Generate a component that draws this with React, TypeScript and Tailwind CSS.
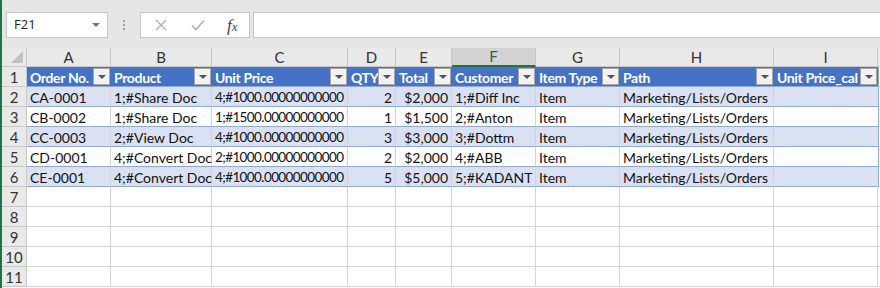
import React from "react";

const cols = [
  { key: "A", w: "w-[84px]", label: "Order No." },
  { key: "B", w: "w-[101px]", label: "Product" },
  { key: "C", w: "w-[136px]", label: "Unit Price" },
  { key: "D", w: "w-[48px]", label: "QTY" },
  { key: "E", w: "w-[56px]", label: "Total" },
  { key: "F", w: "w-[84px]", label: "Customer" },
  { key: "G", w: "w-[84px]", label: "Item Type" },
  { key: "H", w: "w-[154px]", label: "Path" },
  { key: "I", w: "w-[104px]", label: "Unit Price_cal" },
];

const rows = [
  ["CA-0001", "1;#Share Doc", "4;#1000.00000000000", "2", "$2,000", "1;#Diff Inc", "Item", "Marketing/Lists/Orders", ""],
  ["CB-0002", "1;#Share Doc", "1;#1500.00000000000", "1", "$1,500", "2;#Anton", "Item", "Marketing/Lists/Orders", ""],
  ["CC-0003", "2;#View Doc", "4;#1000.00000000000", "3", "$3,000", "3;#Dottm", "Item", "Marketing/Lists/Orders", ""],
  ["CD-0001", "4;#Convert Doc", "2;#1000.00000000000", "2", "$2,000", "4;#ABB", "Item", "Marketing/Lists/Orders", ""],
  ["CE-0001", "4;#Convert Doc", "4;#1000.00000000000", "5", "$5,000", "5;#KADANT", "Item", "Marketing/Lists/Orders", ""],
];

const font = "font-['Lato','Liberation_Sans',sans-serif]";

function FilterButton() {
  return (
    <div className="mr-px flex h-[17px] w-[17px] shrink-0 items-center justify-center border border-[#a6a6a6] bg-[#f2f2f2]">
      <div className="h-0 w-0 border-x-[4px] border-t-[4px] border-x-transparent border-t-[#555]" />
    </div>
  );
}

function RowHead({ n }: { n: number }) {
  return (
    <div className="flex w-[25px] shrink-0 items-center justify-center border-r border-b border-[#c8c8c8] bg-[#e9e9e9] pt-px text-[15px] text-[#333]">
      {n}
    </div>
  );
}

export default function App() {
  return (
    <div className={`flex h-[288px] w-[880px] overflow-hidden bg-white ${font}`}>
      <div className="w-[2px] shrink-0 bg-[#217346]" />
      <div className="flex min-w-0 flex-1 flex-col">
        {/* formula bar */}
        <div className="flex h-[48px] shrink-0 items-start bg-[#e6e6e6] pt-[12px]">
          <div className="ml-[4px] flex h-[26px] w-[102px] items-center justify-between border border-[#c6c6c6] bg-white pl-[7px] pr-[7px] font-['Open_Sans',sans-serif] text-[13px] text-[#222]">
            <span>F21</span>
            <div className="h-0 w-0 border-x-[4px] border-t-[4px] border-x-transparent border-t-[#777]" />
          </div>
          <div className="flex h-[26px] w-[32px] flex-col items-center justify-center gap-[2px]">
            <div className="h-[2px] w-[2px] bg-[#a0a0a0]" />
            <div className="h-[2px] w-[2px] bg-[#a0a0a0]" />
            <div className="h-[2px] w-[2px] bg-[#a0a0a0]" />
          </div>
          <div className="flex h-[26px] w-[110px] items-center border border-[#c6c6c6] bg-white">
            <svg width="12" height="12" viewBox="0 0 12 12" className="ml-[14px]">
              <path d="M1 1 L11 11 M11 1 L1 11" stroke="#b0b0b0" strokeWidth="1.4" fill="none" />
            </svg>
            <svg width="14" height="12" viewBox="0 0 14 12" className="ml-[24px]">
              <path d="M1 6.5 L5 10.5 L13 1.5" stroke="#b0b0b0" strokeWidth="1.6" fill="none" />
            </svg>
            <span className="ml-[22px] font-['Liberation_Serif',serif] text-[17px] italic leading-none text-[#444]">
              f<span className="text-[13px]">x</span>
            </span>
          </div>
          <div className="ml-[3px] h-[26px] flex-1 border-y border-l border-[#c6c6c6] bg-white" />
        </div>

        {/* column headers */}
        <div className="flex h-[19px] shrink-0">
          <div className="relative w-[25px] shrink-0 border-r border-b border-[#c8c8c8] bg-[#e9e9e9]">
            <div className="absolute right-[3px] bottom-[3px] h-0 w-0 border-b-[12px] border-l-[12px] border-l-transparent border-b-[#c2c2c2]" />
          </div>
          {cols.map((c) => (
            <div
              key={c.key}
              className={`${c.w} flex shrink-0 items-center justify-center border-r text-[15px] ${
                c.key === "F"
                  ? "border-b-2 border-r-[#c8c8c8] border-b-[#217346] bg-[#d3d3d3] text-[#1e6b3f]"
                  : "border-b border-[#c8c8c8] bg-[#e9e9e9] text-[#333]"
              }`}
            >
              {c.key}
            </div>
          ))}
          <div className="flex-1 border-b border-[#c8c8c8] bg-[#e9e9e9]" />
        </div>

        {/* row 1: table header */}
        <div className="flex h-[20px] shrink-0">
          <RowHead n={1} />
          {cols.map((c) => (
            <div
              key={c.key}
              className={`${c.w} flex shrink-0 items-center justify-between border-b border-[#8ea9db] bg-[#4472c4] pl-[3px] text-[14px] font-bold tracking-[-0.35px] text-white`}
            >
              <span className="whitespace-nowrap pt-px">{c.label}</span>
              <FilterButton />
            </div>
          ))}
          <div className="flex-1 border-b border-l border-[#d4d4d4] border-l-[#8ea9db]" />
        </div>

        {/* data rows */}
        {rows.map((r, i) => (
          <div key={i} className="flex h-[20px] shrink-0">
            <RowHead n={i + 2} />
            {cols.map((c, j) => (
              <div
                key={c.key}
                className={`${c.w} flex shrink-0 items-center overflow-visible whitespace-nowrap border-b border-b-[#8ea9db] px-[3px] pt-px text-[#111] ${
                  i % 2 === 0 ? "bg-[#d9e1f2]" : "bg-white"
                } ${j === 3 || j === 4 ? "justify-end" : ""} ${
                  j === 2 ? "text-[13.5px] tracking-[-0.6px]" : "text-[14px]"
                } ${j < 8 ? "border-r border-r-[#d4d4d4]" : ""}`}
              >
                {r[j]}
              </div>
            ))}
            <div className="flex-1 border-b border-l border-[#d4d4d4] border-l-[#8ea9db]" />
          </div>
        ))}

        {/* empty rows */}
        {[7, 8, 9, 10, 11].map((n) => (
          <div key={n} className="flex h-[20px] shrink-0">
            <RowHead n={n} />
            {cols.map((c) => (
              <div key={c.key} className={`${c.w} shrink-0 border-r border-b border-[#d4d4d4]`} />
            ))}
            <div className="flex-1 border-b border-[#d4d4d4]" />
          </div>
        ))}
      </div>
    </div>
  );
}
